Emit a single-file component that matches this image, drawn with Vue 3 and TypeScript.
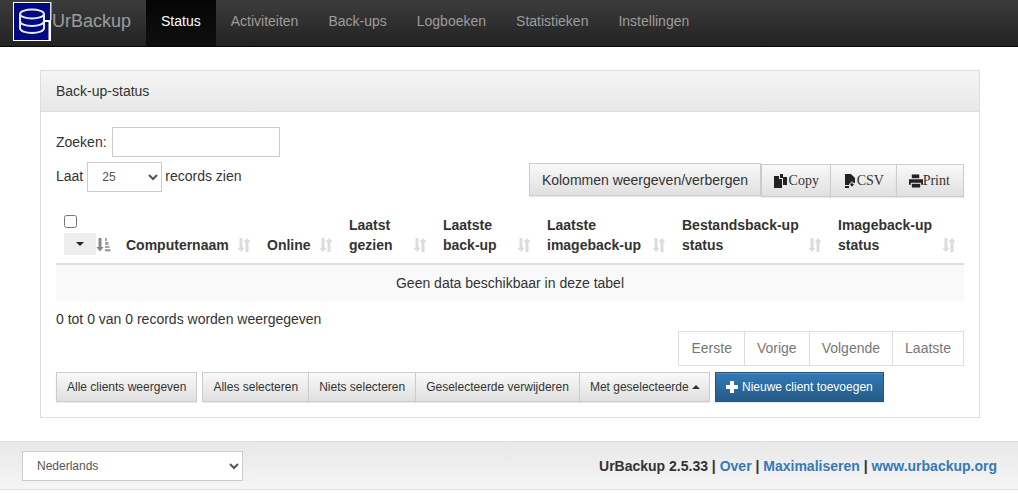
<script setup lang="ts">
const navItems: string[] = ['Activiteiten', 'Back-ups', 'Logboeken', 'Statistieken', 'Instellingen']
interface Col { cls: string; lines: string[] }
const cols: Col[] = [
  { cls: 'c2', lines: ['Computernaam'] },
  { cls: 'c3', lines: ['Online'] },
  { cls: 'c4', lines: ['Laatst', 'gezien'] },
  { cls: 'c5', lines: ['Laatste', 'back-up'] },
  { cls: 'c6', lines: ['Laatste', 'imageback-up'] },
  { cls: 'c7', lines: ['Bestandsback-up', 'status'] },
  { cls: 'c8', lines: ['Imageback-up', 'status'] },
]
const pages: string[] = ['Eerste', 'Vorige', 'Volgende', 'Laatste']
const selBtns: string[] = ['Alles selecteren', 'Niets selecteren', 'Geselecteerde verwijderen']
</script>

<template>
  <div class="page">
    <nav class="navbar">
      <svg class="logo" width="39" height="39" viewBox="0 0 39 39">
        <rect x="0" y="0" width="38" height="39" fill="#fff" />
        <rect x="1" y="1" width="36" height="37" fill="#000a80" />
        <rect x="37" y="0" width="1.500" height="18" fill="#ddd" />
        <g fill="none" stroke="#e8e8ff" stroke-width="2">
          <ellipse cx="19" cy="12" rx="12" ry="4.500" />
          <path d="M7 12v14c0 3 5.500 5 12 5s12-2 12-5V12" />
          <path d="M7 19c0 3 5.500 5 12 5s12-2 12-5" />
        </g>
        <path d="M31 19h5" stroke="#fff" stroke-width="2" />
        <rect x="35.500" y="18" width="2" height="20" fill="#fff" />
      </svg>
      <span class="brand">UrBackup</span>
      <ul class="nav">
        <li class="nav-item active">Status</li>
        <li v-for="n in navItems" :key="n" class="nav-item">{{ n }}</li>
      </ul>
    </nav>

    <main class="main">
      <section class="panel">
        <header class="panel-heading">Back-up-status</header>
        <div class="panel-body">
          <div class="search">
            <label for="zoek">Zoeken:</label>
            <input id="zoek" class="search-input" type="text" />
          </div>
          <div class="toolbar">
            <div class="length">
              <span>Laat</span>
              <select class="length-select"><option>25</option></select>
              <span class="records">records zien</span>
            </div>
            <div class="tools">
              <button class="btn colvis">Kolommen weergeven/verbergen</button>
              <div class="export">
                <button class="btn serif">
                  <svg width="15" height="14" viewBox="0 0 15 14"><path d="M0 2h5v3h3v9H0z" fill="#222" /><path d="M6 0h3v3h4v8H9V4H6z" fill="#222" /><path d="M6 0v2h2z" fill="#222" /></svg>Copy
                </button>
                <button class="btn serif">
                  <svg width="13" height="14" viewBox="0 0 13 14"><path d="M1 0h6l4 4v5H8v2H1z" fill="#222" /><path d="M7 8h2v2h2l-3 3-3-3h2z" fill="#222" stroke="#eee" stroke-width=".7" /><rect x="1" y="12" width="4" height="2" fill="#222" /></svg>CSV
                </button>
                <button class="btn serif">
                  <svg width="14" height="14" viewBox="0 0 15 14"><path d="M3 0h8v4H3z" fill="#222" /><path d="M0 5h15v6h-2V9H2v2H0z" fill="#222" /><path d="M3 10h9v4H3z" fill="#222" /></svg>Print
                </button>
              </div>
            </div>
          </div>

          <table class="table">
            <colgroup>
              <col class="w1" /><col class="w2" /><col class="w3" /><col class="w4" />
              <col class="w5" /><col class="w6" /><col class="w7" /><col class="w8" />
            </colgroup>
            <thead>
              <tr>
                <th class="first">
                  <span class="check"></span>
                  <div class="first-row">
                    <span class="ctl"><i class="caret-down"></i></span>
                    <svg class="sort-first" width="15" height="15" viewBox="0 0 15 15">
                      <path d="M2.500 1h3v9h2.200L4 14.500 .3 10h2.200z" fill="#8a8a8a" />
                      <path d="M9 1h2v3H9zM9 5h3.500v3H9zM9 9h4.500v2H9zM9 12h5.500v2.500H9z" fill="#a5a5a5" />
                    </svg>
                  </div>
                </th>
                <th v-for="c in cols" :key="c.cls">
                  <div class="th-inner">
                    <span class="th-label"><span v-for="l in c.lines" :key="l" class="th-line">{{ l }}</span></span>
                    <svg class="sort" width="14" height="14" viewBox="0 0 14 14">
                      <path d="M2.500 0h3v10h2L4 14 .5 10h2z" fill="#dcdcdc" />
                      <path d="M8.500 14h3V4h2L10 0 6.500 4h2z" fill="#dcdcdc" />
                    </svg>
                  </div>
                </th>
              </tr>
            </thead>
            <tbody>
              <tr><td colspan="8" class="empty">Geen data beschikbaar in deze tabel</td></tr>
            </tbody>
          </table>

          <div class="info">0 tot 0 van 0 records worden weergegeven</div>
          <div class="pager">
            <a v-for="p in pages" :key="p" class="page-link">{{ p }}</a>
          </div>

          <div class="actions">
            <button class="btn small">Alle clients weergeven</button>
            <div class="group">
              <button v-for="s in selBtns" :key="s" class="btn small">{{ s }}</button>
              <button class="btn small last">Met geselecteerde <i class="caret-up"></i></button>
            </div>
            <button class="btn small primary">
              <svg class="plus" width="12" height="12" viewBox="0 0 12 12"><path d="M4 0h4v4h4v4H8v4H4V8H0V4h4z" fill="#fff" /></svg>
              <span>Nieuwe client toevoegen</span>
            </button>
          </div>
        </div>
      </section>
    </main>

    <footer class="footer">
      <select class="lang"><option>Nederlands</option></select>
      <div class="foot-links">
        <b class="dark-b">UrBackup 2.5.33</b> | <a>Over</a> | <a>Maximaliseren</a> | <a>www.urbackup.org</a>
      </div>
    </footer>
  </div>
</template>

<style>
html, body { margin: 0; background: #fff; }
</style>

<style scoped>
.page {
  font-family: "Liberation Sans", Arial, sans-serif;
  font-size: 14px;
  line-height: 20px;
  color: #333;
  overflow: hidden;
}
.navbar {
  height: 46px;
  border-bottom: 1px solid #080808;
  background: linear-gradient(to bottom, #3c3c3c 0, #222 100%);
  display: flex;
  align-items: flex-start;
}
.logo { margin: 2px 0 0 13px; flex: none; }
.brand { font-size: 18px; color: #9d9d9d; line-height: 42px; margin-left: 0; width: 94px; flex: none; }
.nav { list-style: none; margin: 0; padding: 0; display: flex; }
.nav-item { height: 46px; line-height: 42px; padding: 0 15px; color: #9d9d9d; }
.nav-item.active { color: #fff; background: linear-gradient(to bottom, #050505 0, #0f0f0f 100%); }
.main { padding: 23px 38px 23px 40px; }
.panel { border: 1px solid #ddd; }
.panel-heading {
  height: 40px;
  line-height: 40px;
  padding: 0 15px;
  border-bottom: 1px solid #ddd;
  background: linear-gradient(to bottom, #f5f5f5 0, #e8e8e8 100%);
}
.panel-body { padding: 15px; }
.search { display: flex; align-items: center; gap: 5px; height: 30px; }
.search-input { width: 168px; height: 30px; box-sizing: border-box; border: 1px solid #ccc; padding: 0 6px; background: #fff; }
.toolbar { display: flex; justify-content: space-between; margin-top: 5px; height: 34px; }
.length { display: flex; align-items: flex-start; gap: 4px; line-height: 28px; }
.records { margin-left: -1px; }
.length-select {
  width: 75px; height: 30px; box-sizing: border-box; border: 1px solid #ccc; background: #fff;
  color: #555; font: 12px "Liberation Sans", Arial, sans-serif; padding: 0 10px; border-radius: 0;
}
.tools { display: flex; align-items: flex-start; margin-top: 1px; }
.btn {
  display: inline-flex; align-items: center; justify-content: center;
  box-sizing: border-box;
  border: 1px solid #ccc;
  border-radius: 0;
  margin: 0;
  background: linear-gradient(to bottom, #f9f9f9 0, #e0e0e0 100%);
  box-shadow: inset 0 1px 0 rgba(255,255,255,.15), 0 1px 1px rgba(0,0,0,.075);
  color: #333;
  font-family: "Liberation Sans", Arial, sans-serif;
  font-size: 14px;
  white-space: pre;
}
.colvis { width: 232px; height: 33px; }
.export { display: flex; margin-top: 1px; }
.export .btn { height: 33px; margin-left: -1px; padding: 0; }
.export .btn:nth-child(1) { width: 70px; margin-left: 0; padding-left: 4px; }
.export .btn:nth-child(2) { width: 67px; padding-left: 4px; }
.export .btn:nth-child(3) { width: 68px; padding-left: 2px; }
.export svg { flex: none; }
.serif { font-family: "Liberation Serif", "Times New Roman", serif; }
.table { width: 908px; table-layout: fixed; border-collapse: collapse; margin-top: 9px; }
.w1 { width: 62px; } .w2 { width: 141px; } .w3 { width: 82px; } .w4 { width: 94px; }
.w5 { width: 104px; } .w6 { width: 135px; } .w7 { width: 156px; } .w8 { width: 134px; }
th {
  padding: 10px 8px 8px;
  text-align: left;
  vertical-align: bottom;
  border-bottom: 2px solid #ddd;
  font-weight: bold;
  color: #333;
}
th.first { padding: 10px 0 8px 8px; }
.th-inner { display: flex; justify-content: space-between; align-items: flex-end; }
.th-label { display: flex; flex-direction: column; }
.th-line { display: block; white-space: nowrap; }
.sort { flex: none; margin-bottom: 3px; }
.sort-first { flex: none; }
.check {
  display: block; width: 13px; height: 13px; box-sizing: border-box;
  border: 1px solid #767676; border-radius: 2.500px; background: #fff;
  margin-bottom: 5px;
}
.first-row { display: flex; align-items: center; gap: 0; height: 22px; }
.ctl { width: 32px; height: 22px; background: #eee; display: flex; align-items: center; justify-content: center; flex: none; }
.caret-down { width: 0; height: 0; border-left: 4px solid transparent; border-right: 4px solid transparent; border-top: 4px solid #222; }
.caret-up { display: inline-block; width: 0; height: 0; border-left: 4px solid transparent; border-right: 4px solid transparent; border-bottom: 4px solid #333; vertical-align: middle; }
.empty { background: #f9f9f9; text-align: center; height: 36px; padding: 0; }
.info { margin-top: 8px; line-height: 20px; }
.pager { display: flex; justify-content: flex-end; margin-top: 2px; }
.page-link {
  height: 35px; line-height: 33px; box-sizing: border-box; padding: 0 12px; border: 1px solid #ddd; margin-left: -1px; color: #777; background: #fff;
}
.actions { display: flex; gap: 5px; margin-top: 6px; }
.small { height: 30px; font-size: 12px; padding: 0 10px; }
.group { display: flex; }
.group .btn { margin-left: -1px; }
.group .btn:first-child { margin-left: 0; }
.group .last { padding-right: 9px; }
.primary {
  background: linear-gradient(to bottom, #337ab7 0, #265a88 100%);
  border-color: #245580; color: #fff; gap: 4px; width: 169px; justify-content: flex-start;
}
.plus { flex: none; }
.footer {
  height: 49px; box-sizing: border-box;
  border-top: 1px solid #ddd;
  border-bottom: 1px solid #ddd;
  background: linear-gradient(to bottom, #e8e8e8 0, #f5f5f5 100%);
  display: flex; align-items: center; justify-content: space-between;
  padding: 0 21px 0 22px;
}
.lang {
  width: 221px; height: 30px; box-sizing: border-box; border: 1px solid #ccc; background: #fff; color: #555;
  font: 12px "Liberation Sans", Arial, sans-serif; padding: 0 10px; border-radius: 0;
}
.foot-links { font-weight: bold; }
.foot-links a { color: #337ab7; }
.dark-b { color: #333; }
</style>
